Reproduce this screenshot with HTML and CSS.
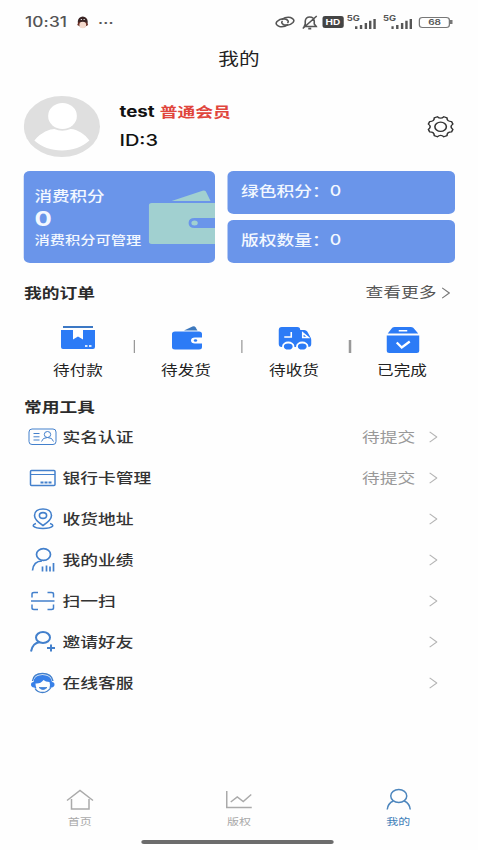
FILE: index.html
```html
<!DOCTYPE html>
<html lang="zh-CN">
<head>
<meta charset="utf-8">
<title>我的</title>
<link rel="stylesheet" href="styles.css">
</head>
<body>
<div class="screen">
  <div class="status">
    <span class="time">10:31</span>
    <svg class="penguin" viewBox="0 0 13 13" preserveAspectRatio="none"><ellipse cx="6.5" cy="6" rx="5" ry="5.6" fill="#3a2424"/><path d="M1 9q1-4 3-3h5q2 0 3 3l-2 1H3z" fill="#6b3026"/><ellipse cx="6.5" cy="9" rx="3.4" ry="3.2" fill="#f3d9cc"/><path d="M4.5 3.5h1.3M7.3 3.5h1.3" stroke="#ddd"/></svg>
    <span class="dots">···</span>
    <div class="signals">
      <svg class="link" viewBox="0 0 20 14" preserveAspectRatio="none" fill="none" stroke="#555" stroke-width="1.6"><path d="M13 9.500Q9 12.500 4.500 11.500-.500 9.500 2 6.500 6 2.500 11 4.200 14.500 6 12.500 8"/><path d="M7 4.500Q11 1.500 15.500 2.500 20.500 4.500 18 7.500 14 11.500 9 9.800 5.500 8 7.500 6"/></svg>
      <svg class="bell" viewBox="0 0 17 15" preserveAspectRatio="none" fill="none" stroke="#555" stroke-width="1.6"><path d="M3 11.500h12L13 9V6Q12.500 2 8.500 2T4 6v3zM7 13.600h3M15.500 1 1.500 13.500"/></svg>
      <div class="hd">HD</div>
      <div class="cell"><span>5G</span><svg class="bars" viewBox="0 0 22 12" preserveAspectRatio="none" fill="#555"><path d="M0 9h2.500v3H0zM5 7.500h2.500V12H5zM10 5.500h2.500V12H10zM14.500 3H17v9h-2.500zM19 1h2.500v11H19z"/></svg></div>
      <div class="cell"><span>5G</span><svg class="bars" viewBox="0 0 22 12" preserveAspectRatio="none" fill="#555"><path d="M0 9h2.500v3H0zM5 7.500h2.500V12H5zM10 5.500h2.500V12H10zM14.500 3H17v9h-2.500zM19 1h2.500v11H19z"/></svg></div>
      <div class="battery">68</div>
    </div>
  </div>
  <h1 class="title">我的</h1>

  <div class="profile">
    <svg class="avatar" viewBox="0 0 61 61"><defs><clipPath id="face"><circle cx="30.500" cy="30.500" r="30.500"/></clipPath></defs><g clip-path="url(#face)"><path fill="#dfdfdf" d="M0 0h61v61H0z"/><ellipse cx="31" cy="20" rx="11.500" ry="13" fill="#fff"/><path fill="#fff" d="M8.500 44.500C14 36 21 33 24.500 33q6 3.500 13 0C43 33.500 49 38 52.500 44.500 47 51 39 54.500 30.500 54.500S14 51 8.500 44.500z"/></g></svg>
    <div class="who">
      <div class="name">test <span class="level">普通会员</span></div>
      <div class="uid">ID:3</div>
    </div>
    <svg class="gear" viewBox="0 0 24 24" preserveAspectRatio="none" fill="none" stroke="#333" stroke-width="1.300" stroke-linejoin="round"><circle cx="12" cy="12" r="4.800"/><path d="M9.300 1.800Q12 4.800 14.700 1.800L17.300 2.900Q17.300 6.700 21.100 6.700L22.200 9.300Q19.200 12 22.200 14.700L21.100 17.300Q17.300 17.300 17.300 21.100L14.700 22.200Q12 19.200 9.300 22.200L6.700 21.100Q6.700 17.300 2.900 17.300L1.800 14.700Q4.800 12 1.800 9.300L2.900 6.700Q6.700 6.700 6.700 2.900Z"/></svg>
  </div>

  <div class="cards">
    <div class="card points">
      <div class="points-label">消费积分</div>
      <div class="points-value">0</div>
      <div class="points-note">消费积分可管理</div>
      <svg class="wallet" viewBox="0 0 67 55" preserveAspectRatio="none" fill="#a1d0d0"><path d="M23 11 54 .800q3-1 4 2l4 8.200z"/><path d="M3 13h64v15H46q-6 0-6 5t6 5h21v16H3q-3 0-3-3V16q0-3 3-3z"/><ellipse cx="46" cy="33" rx="3.200" ry="2.500"/></svg>
    </div>
    <div class="stack">
      <div class="card stat">绿色积分：0</div>
      <div class="card stat">版权数量：0</div>
    </div>
  </div>

  <div class="heading">
    <h2>我的订单</h2>
    <div class="more">查看更多<svg class="arrow" viewBox="0 0 10 14" preserveAspectRatio="none"><path d="M1 1l8 6-8 6"/></svg></div>
  </div>
  <div class="orders">
    <div class="order"><svg viewBox="0 0 36 28" preserveAspectRatio="none"><path fill="#3c78c4" d="M3 0h30v2H3z"/><path fill="#2c7bf6" d="M1 4h12v9.500l5-3 5 3V4h12v17q0 2-2 2H3q-2 0-2-2z"/><path fill="#d9e8ff" d="M25 19h2.500v2H25zM29 19h2.500v2H29z"/></svg><span>待付款</span></div>
    <div class="order"><svg viewBox="-1.500 0 36 28" preserveAspectRatio="none"><path fill="#3d78bd" d="M15 4.500 23.500 .500q2-.800 3 .700l2 3.300z"/><path fill="#2c7bf6" d="M6 5.500h24q3 0 3 2.500v3.500h-7q-4 0-4 3t4 3h7V21q0 2.500-3 2.500H6q-3 0-3-2.500V8q0-2.500 3-2.500z"/><ellipse cx="26.500" cy="14.500" rx="1.700" ry="1.300" fill="#2c7bf6"/></svg><span>待发货</span></div>
    <div class="order"><svg viewBox="0 0 36 28" preserveAspectRatio="none"><path fill="#2c7bf6" d="M5.500 1H21q3 0 3 3h4q2 0 3 1.500l3 5.500q1 1 1 3v4q0 3-3 3H5.500q-3 0-3-3V4q0-3 3-3z"/><path fill="none" stroke="#fff" stroke-width="1.600" d="M15 6v5H8M26.500 7v4.500h5.500z"/><g fill="#2c7bf6" stroke="#fff" stroke-width="1.800"><ellipse cx="12" cy="20.500" rx="5.300" ry="4"/><ellipse cx="26" cy="20.500" rx="5.300" ry="4"/></g></svg><span>待收货</span></div>
    <div class="order"><svg viewBox="-1 0 36 28" preserveAspectRatio="none"><path fill="#2c7bf6" d="M3 7.500 7.500 1.800Q8.500 1 10 1h16q1.500 0 2.500.800L33.500 7.500zM2 9.500h32.500V25q0 2-2.500 2H4.500Q2 27 2 25z"/><path fill="none" stroke="#fff" stroke-width="1.500" d="M14 4.800h8.500"/><path fill="none" stroke="#fff" stroke-width="2.300" d="m12 16.500 5 5 8-6"/></svg><span>已完成</span></div>
  </div>

  <h2 class="tools-title">常用工具</h2>
  <div class="tools">
    <div class="tool"><svg viewBox="0 0 30 26" preserveAspectRatio="none"><rect x="1.500" y="5" width="27" height="15.500" rx="3"/><path d="M6 9.500h6M6 12.800h6M6 16h6M14 17.500q1-4 6-4t6 4"/><ellipse cx="20" cy="10.500" rx="3.200" ry="3"/></svg><span>实名认证</span><em>待提交</em><svg class="arrow" viewBox="0 0 10 14" preserveAspectRatio="none"><path d="M1 1l8 6-8 6"/></svg></div>
    <div class="tool"><svg viewBox="0 0 30 26" preserveAspectRatio="none"><rect x="3" y="5.500" width="24.500" height="15" rx="1" stroke-width="1.500"/><path d="M3 9.500h24.500"/><path d="M13 17.500h11" stroke-width="2" stroke-dasharray="3 1"/></svg><span>银行卡管理</span><em>待提交</em><svg class="arrow" viewBox="0 0 10 14" preserveAspectRatio="none"><path d="M1 1l8 6-8 6"/></svg></div>
    <div class="tool"><svg viewBox="0 0 30 26" preserveAspectRatio="none" stroke-width="1.600"><path d="M15.500 19.500Q7 14 7 9.500C7 5.500 10.500 3 15.500 3S24 5.500 24 9.500Q24 14 15.500 19.500z"/><ellipse cx="15.500" cy="9.500" rx="3.600" ry="2.900"/><path d="M8.500 17.500Q5 18.500 6 20.300 8 22.500 15.500 22.500T25 20.300Q26 18.500 22.500 17.500"/></svg><span>收货地址</span><svg class="arrow" viewBox="0 0 10 14" preserveAspectRatio="none"><path d="M1 1l8 6-8 6"/></svg></div>
    <div class="tool"><svg viewBox="0 0 30 26" preserveAspectRatio="none" stroke-width="1.700"><ellipse cx="16" cy="7.500" rx="7" ry="5.800"/><path d="M5 23.500Q6 14 14.500 14M15 19.500v5M19 18.500v6M22.500 19.500v5M26 16v8.500"/></svg><span>我的业绩</span><svg class="arrow" viewBox="0 0 10 14" preserveAspectRatio="none"><path d="M1 1l8 6-8 6"/></svg></div>
    <div class="tool"><svg viewBox="0 0 30 26" preserveAspectRatio="none" stroke-width="1.500"><path d="M4.500 9.500V6q0-1.500 2-1.500h4M20 4.500h4q2 0 2 1.500v3.500M4.500 16.500V20q0 1.500 2 1.500h4M20 21.500h4q2 0 2-1.500v-3.500M3.500 13H27"/></svg><span>扫一扫</span><svg class="arrow" viewBox="0 0 10 14" preserveAspectRatio="none"><path d="M1 1l8 6-8 6"/></svg></div>
    <div class="tool"><svg viewBox="0 0 30 26" preserveAspectRatio="none" stroke-width="2"><ellipse cx="15.500" cy="8.500" rx="7" ry="5.500"/><path d="M3.500 22.500Q5 14 12.500 13M19.500 19h8M23.500 15.500v7"/></svg><span>邀请好友</span><svg class="arrow" viewBox="0 0 10 14" preserveAspectRatio="none"><path d="M1 1l8 6-8 6"/></svg></div>
    <div class="tool"><svg viewBox="0 0 30 26" preserveAspectRatio="none"><path d="M5 11Q6 3.500 15 3.500T25.500 11" stroke-width="1.400"/><path fill="#3880e8" stroke="none" d="M6 12Q6.500 5 15 5T24.500 12q2.500 0 2.500 2.500T24 17.500L22 18Q23 15 22 12q-4 0-6-2-3 4-8 3.500 0 3 1 5l-2.500-1Q3.500 17 3.500 14.500T6 12z"/><path d="M7.500 18.500Q10 22.500 15 22.500T23.500 17.500" stroke-width="1.300"/><path d="M11.500 17.500q4 4 8 0z" fill="#3880e8" stroke-width=".800"/></svg><span>在线客服</span><svg class="arrow" viewBox="0 0 10 14" preserveAspectRatio="none"><path d="M1 1l8 6-8 6"/></svg></div>
  </div>

  <div class="tabs">
    <div class="tab"><svg viewBox="0 0 30 24" preserveAspectRatio="none"><path d="M2 12.500 15 2.500l13 10M6.500 11v10h17.500V11"/></svg><span>首页</span></div>
    <div class="tab"><svg viewBox="0 0 30 24" preserveAspectRatio="none"><path d="M3 3v16.500h25M7 14l6.500-5 6 4.500 8-7"/></svg><span>版权</span></div>
    <div class="tab active"><svg viewBox="0 0 30 24" preserveAspectRatio="none"><ellipse cx="15" cy="8" rx="8" ry="6.500"/><path d="M3.500 21.500Q4 15.500 9.500 13M26.500 21.500Q26 15.500 20.500 13"/></svg><span>我的</span></div>
  </div>
  <div class="home-bar"></div>
</div>
</body>
</html>
```
FILE: styles.css
```css
* { box-sizing: border-box; }
html, body { margin: 0; height: 850px; overflow: hidden; background: #fefefe; }
h1, h2 { margin: 0; }
svg { display: block; flex: none; }

/* Layout is 382.4 units wide, drawn 1.25 times wider than tall. */
.screen {
  width: 382.4px;
  height: 850px;
  transform: scaleX(1.25);
  transform-origin: 0 0;
  display: flex;
  flex-direction: column;
  font-family: Inter, "Noto Sans CJK SC", sans-serif;
  color: #222;
}

.status { height: 44px; padding: 0 22.500px 0 20px; display: flex; align-items: center; color: #555; }
.time { width: 35px; font-size: 13.800px; font-weight: 500; white-space: nowrap; letter-spacing: .1px; }
.penguin { width: 10.400px; height: 13px; margin-left: 6px; }
.dots { margin-left: 7px; font-size: 12px; font-weight: 700; letter-spacing: .2px; }
.signals { margin-left: auto; display: flex; align-items: center; }
.link { width: 16px; height: 14px; margin-right: 5px; }
.bell { width: 13.600px; height: 15px; margin-right: 4px; }
.hd { width: 17px; height: 12px; border-radius: 2px; background: #444; color: #fff; font-size: 8px; line-height: 12px; font-weight: 700; padding-left: 2px; margin-right: 2px; }
.cell { display: flex; align-items: flex-end; height: 14px; margin-right: 5px; }
.cell span { align-self: flex-start; font-size: 7.500px; line-height: 7px; font-weight: 700; width: 7px; white-space: nowrap; }
.bars { width: 17px; height: 11px; }
.battery { position: relative; width: 24.500px; height: 11px; border: 1.200px solid #777; border-radius: 3px; font-size: 8px; font-weight: 600; line-height: 9px; text-align: center; }
.battery::after { content: ""; position: absolute; right: -3px; top: 2.500px; width: 1.500px; height: 4px; background: #777; }

.title { height: 30px; line-height: 30px; text-align: center; font-size: 16.500px; font-weight: 400; }

.profile { height: 61px; margin: 22px 18.800px 0 19.200px; display: flex; }
.avatar { width: 61px; height: 61px; }
.who { margin-left: 15.400px; padding-top: 5px; color: #111; }
.name { font-size: 15px; line-height: 22px; font-weight: 700; color: #111; }
.level { font-size: 14.200px; color: #e0453c; margin-left: .500px; }
.uid { font-size: 16px; line-height: 20px; font-weight: 500; margin-top: 7px; }
.gear { width: 23px; height: 23.500px; margin: 18.500px 0 0 auto; }

.cards { margin: 14px 18.400px 0 19.200px; height: 92px; display: flex; gap: 10px; }
.card { background: #6a95ea; border-radius: 5px; color: #f3f8ff; }
.points { position: relative; width: 153.200px; padding: 13.500px 0 0 8.500px; overflow: hidden; }
.points-label { font-size: 14px; line-height: 22px; font-weight: 500; }
.points-value { font-size: 20.500px; line-height: 24px; font-weight: 700; }
.points-note { position: relative; z-index: 1; font-size: 12.200px; line-height: 20px; font-weight: 500; }
.wallet { position: absolute; right: 0; top: 19px; width: 53.400px; height: 55px; }
.stack { flex: 1; display: grid; grid-template-rows: 43px 43px; gap: 6px; }
.stat { padding-left: 10.500px; line-height: 40px; font-size: 14.200px; font-weight: 500; }

.heading { height: 24px; margin: 18px 22px 0 19.200px; display: flex; justify-content: space-between; align-items: center; }
.heading h2, .tools-title { font-size: 14.200px; line-height: 24px; font-weight: 700; color: #2b2b2b; }
.more { display: flex; align-items: center; gap: 4px; font-size: 14.200px; line-height: 22px; margin-top: -2px; color: #555; }
.arrow { width: 7.200px; height: 12px; fill: none; stroke: #b5b5b5; stroke-width: 1.300; }
.more .arrow { stroke: #777; margin-top: 1px; }

.orders { height: 77px; margin: 0 17.600px 0 19.200px; display: grid; grid-template-columns: repeat(4, 86.400px); }
.order { position: relative; padding-top: 21px; display: flex; flex-direction: column; align-items: center; font-size: 13.300px; line-height: 20px; }
.order svg { width: 28.800px; height: 28px; }
.order span { margin-top: 6px; }
.order + .order::before { content: ""; position: absolute; left: 1px; top: 35px; width: 1.200px; height: 13px; background: #999; }

.tools-title { height: 21px; margin: 14px 0 0 19.200px; line-height: 21px; }
.tools { margin: -1px 32.600px 0 22.400px; }
.tool { height: 40.900px; display: flex; align-items: center; font-size: 14.200px; font-weight: 500; color: #333; }
.tool svg:first-child { width: 24px; height: 26px; margin-right: 3.600px; fill: none; stroke: #4380cc; position: relative; top: 1px; }
.tool .arrow { margin-left: auto; position: relative; top: 1px; }
.tool em { margin-left: auto; font-style: normal; font-weight: 400; color: #999; }
.tool em + .arrow { margin-left: 10.400px; }

.tabs { margin-top: auto; height: 56px; display: grid; grid-template-columns: repeat(3, 1fr); }
.tab { padding-top: 4px; display: flex; flex-direction: column; align-items: center; font-size: 9.600px; line-height: 14px; color: #aaa; }
.tab svg { width: 24px; height: 24px; fill: none; stroke: #aaa; stroke-width: 1.500; margin-bottom: 3px; }
.tab.active { color: #3f7db8; }
.tab.active svg { stroke: #4d86bd; }
.home-bar { width: 154.400px; height: 4px; margin: 0 0 6px 113px; border-radius: 2px; background: #6c6c6c; }
```
